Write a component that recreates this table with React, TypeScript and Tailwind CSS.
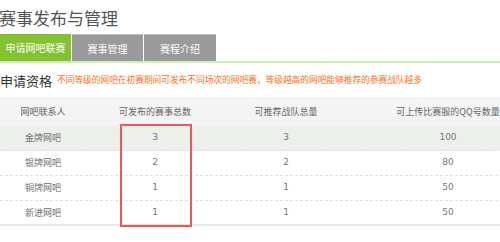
import React from "react";

const rows = [
  { name: "金牌网吧", a: "3", b: "3", c: "100" },
  { name: "银牌网吧", a: "2", b: "2", c: "80" },
  { name: "铜牌网吧", a: "1", b: "1", c: "50" },
  { name: "新进网吧", a: "1", b: "1", c: "50" },
];

export default function App() {
  return (
    <div
      className="relative w-[500px] h-[242px] overflow-hidden bg-white"
      style={{ fontFamily: '"Noto Sans CJK SC", "Noto Sans", sans-serif' }}
    >
      <div className="h-[34px] pt-[8px] text-[17px] leading-[20px] text-[#555555] -ml-[1px]">
        赛事发布与管理
      </div>
      <div className="flex h-[29px] border-b-2 border-[#d3ebb8]">
        <div className="w-[71px] h-[27px] flex items-center justify-center bg-[#84c232] text-white text-[10px]">
          申请网吧联赛
        </div>
        <div className="ml-[1px] w-[71px] h-[27px] flex items-center justify-center bg-[#9a9a9a] border-t border-[#bbbbbb] text-white text-[10px]">
          赛事管理
        </div>
        <div className="ml-[1px] w-[72px] h-[27px] flex items-center justify-center bg-[#9a9a9a] border-t border-[#bbbbbb] text-white text-[10px]">
          赛程介绍
        </div>
      </div>
      <div className="h-[34px] flex items-center">
        <span className="text-[13px] leading-none text-[#333333]">申请资格</span>
        <span className="ml-[5px] text-[8.7px] leading-none text-[#ff6f1a] whitespace-nowrap">
          不同等级的网吧在初赛期间可发布不同场次的网吧赛，等级越高的网吧能够推荐的参赛战队越多
        </span>
      </div>
      <div className="relative w-[548px]">
        <div className="grid grid-cols-[86px_138px_124px_200px] h-[29px] items-center bg-[#f4f4f4] text-[9px] text-[#666666] text-center">
          <div>网吧联系人</div>
          <div>可发布的赛事总数</div>
          <div>可推荐战队总量</div>
          <div className="whitespace-nowrap">可上传比赛服的QQ号数量</div>
        </div>
        {rows.map((r, i) => (
          <div
            key={r.name}
            className={
              "grid grid-cols-[86px_138px_124px_200px] h-[25px] items-center text-[9px] text-[#6f6f6f] text-center " +
              (i === 0 ? "bg-[#ebf0ea] " : "bg-white ") +
              (i === rows.length - 1
                ? "border-b-2 border-solid border-[#e8e8e8]"
                : "border-b border-dashed border-[#e2e2e2]")
            }
          >
            <div>{r.name}</div>
            <div className="text-[#777777]" style={{ fontFamily: '"DejaVu Sans", sans-serif' }}>{r.a}</div>
            <div className="text-[#777777]" style={{ fontFamily: '"DejaVu Sans", sans-serif' }}>{r.b}</div>
            <div className="text-[#777777]" style={{ fontFamily: '"DejaVu Sans", sans-serif' }}>{r.c}</div>
          </div>
        ))}
        <div className="absolute left-[120px] top-[27px] w-[72px] h-[103px] border-2 border-[#f25555]" />
      </div>
    </div>
  );
}
